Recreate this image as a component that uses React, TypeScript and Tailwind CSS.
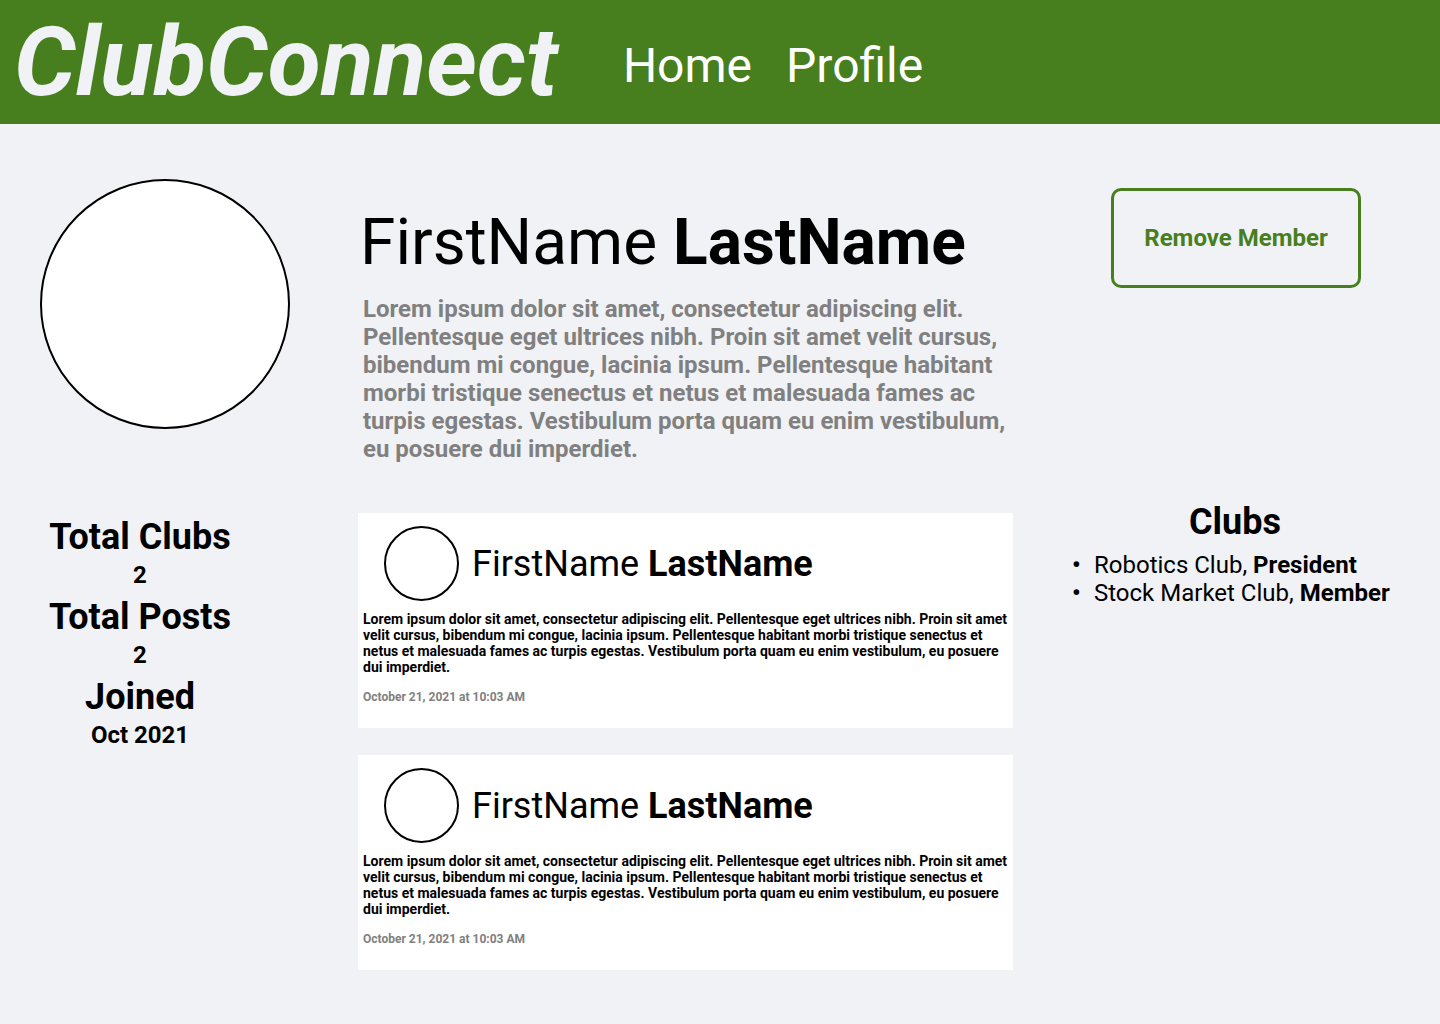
const bio =
  'Lorem ipsum dolor sit amet, consectetur adipiscing elit. Pellentesque eget ultrices nibh. Proin sit amet velit cursus, bibendum mi congue, lacinia ipsum. Pellentesque habitant morbi tristique senectus et netus et malesuada fames ac turpis egestas. Vestibulum porta quam eu enim vestibulum, eu posuere dui imperdiet.';

const stats = [
  { label: 'Total Clubs', value: '2' },
  { label: 'Total Posts', value: '2' },
  { label: 'Joined', value: 'Oct 2021' },
];

const clubs = [
  { name: 'Robotics Club', role: 'President' },
  { name: 'Stock Market Club', role: 'Member' },
];

const posts = [
  { id: 1, text: bio, date: 'October 21, 2021 at 10:03 AM' },
  { id: 2, text: bio, date: 'October 21, 2021 at 10:03 AM' },
];

function Post({ text, date }: { text: string; date: string }) {
  return (
    <article className="bg-white px-[5px] pt-[13px] pb-6">
      <header className="flex items-center gap-[13px] pl-[21px]">
        <div className="size-[75px] shrink-0 rounded-full border-2 border-black bg-white" />
        <h2 className="text-[36px] leading-[42px]">
          FirstName <b>LastName</b>
        </h2>
      </header>
      <p className="mt-[10px] text-[14px] leading-[16px] font-bold">{text}</p>
      <time className="mt-[15px] block text-[12px] leading-[14px] font-bold text-[#808080]">{date}</time>
    </article>
  );
}

export default function App() {
  return (
    <div className="min-h-screen bg-[#f0f2f6] font-['Roboto',sans-serif] text-black">
      <header className="flex h-[124px] items-center bg-[#487f1e] pl-[14px]">
        <a href="#" className="text-[97px] leading-[112px] font-bold text-[#f0f2f6] italic">
          ClubConnect
        </a>
        <nav className="ml-[65px] flex gap-[34px] pt-2 text-[48px] leading-[56px] text-white">
          <a href="#home">Home</a>
          <a href="#profile">Profile</a>
        </nav>
      </header>

      <main className="grid grid-cols-[250px_minmax(0,1fr)_318px] gap-x-[59px] pt-[55px] pr-[50px] pb-[54px] pl-10">
        <div>
          <div className="size-[250px] rounded-full border-2 border-black bg-white" />
          <dl className="mt-[87px] grid w-[200px] gap-[7px] text-center font-bold">
            {stats.map((s) => (
              <div key={s.label}>
                <dt className="text-[36px] leading-[42px]">{s.label}</dt>
                <dd className="mt-[3px] text-[24px] leading-[28px]">{s.value}</dd>
              </div>
            ))}
          </dl>
        </div>

        <div className="pl-[9px]">
          <section className="pt-[26px]">
            <h1 className="pl-[2px] text-[64px] leading-[75px] whitespace-nowrap">
              FirstName <b>LastName</b>
            </h1>
            <p className="mt-[15px] pl-[5px] text-[24px] leading-[28px] font-bold text-[#808080]">{bio}</p>
          </section>
          <div className="mt-[50px] grid gap-[27px]">
            {posts.map((p) => (
              <Post key={p.id} text={p.text} date={p.date} />
            ))}
          </div>
        </div>

        <aside className="pt-[9px]">
          <button
            type="button"
            className="ml-[39px] h-[100px] w-[250px] rounded-[10px] border-3 border-[#487f1e] text-[24px] leading-[28px] font-bold text-[#487f1e]"
          >
            Remove Member
          </button>
          <h2 className="mt-[213px] pl-2 text-center text-[36px] leading-[42px] font-bold">Clubs</h2>
          <ul className="mt-2 text-[24px] leading-[28px]">
            {clubs.map((c) => (
              <li
                key={c.name}
                className="whitespace-nowrap before:inline-block before:w-[22px] before:font-bold before:content-['•']"
              >
                {c.name}, <b>{c.role}</b>
              </li>
            ))}
          </ul>
        </aside>
      </main>
    </div>
  );
}
